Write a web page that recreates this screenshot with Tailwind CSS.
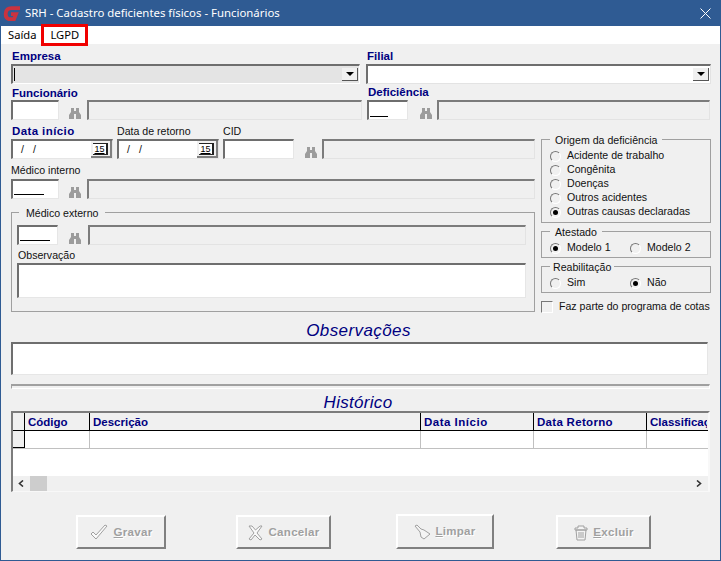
<!DOCTYPE html>
<html lang="en">
<head>
<meta charset="UTF-8">
<script src="https://cdn.jsdelivr.net/npm/@tailwindcss/browser@4"></script>
<title>SRH</title>
</head>
<body class="w-[721px] h-[561px] overflow-hidden bg-[#f0f0f0] font-['Liberation_Sans',sans-serif] text-[10.6px] text-[#111]">
<div class="relative w-[721px] h-[561px] border-x border-b border-[#2f5b93]">

  <!-- title bar -->
  <div class="flex items-center h-[26px] -mx-px bg-[#2f5b93] text-white">
    <svg class="ml-[3px] w-[18px] h-[17px]" viewBox="0 0 18 17"><path d="M17 3.200H8.500Q3.500 3.200 2.800 8T6 14.200H11L13 9.200H8" fill="none" stroke="#c9333f" stroke-width="3.800"/></svg>
    <span class="ml-[4px] font-['Noto_Sans',sans-serif] text-[11.4px]">SRH - Cadastro deficientes físicos - Funcionários</span>
    <svg class="ml-auto mr-[10px] w-[11px] h-[11px]" viewBox="0 0 11 11"><path d="M.5.5l10 10M10.500.5l-10 10" stroke="#fff" fill="none"/></svg>
  </div>

  <!-- menu -->
  <div class="flex items-center h-[18px] bg-white font-['Noto_Sans',sans-serif] text-[11.2px] text-black">
    <span class="ml-[7px]">Saída</span>
    <span class="ml-[14px]">LGPD</span>
  </div>
  <div class="absolute left-[40px] top-[24px] w-[47px] h-[22px] border-[3px] border-[#f00000]"></div>

  <div class="pl-[10px]">
    <!-- empresa / filial -->
    <div class="grid grid-cols-[355px_345px]">
      <div>
        <div class="flex items-end h-[20px] pb-[2px] pl-px leading-none font-bold text-[#000080] text-[11.5px]">Empresa</div>
        <div class="flex items-center justify-between w-[349px] h-[20px] bg-[#e4e4e4] border-t-2 border-l-2 border-t-[#6e6e6e] border-l-[#6e6e6e] border-r border-b border-r-white border-b-white">
          <span class="ml-px w-px h-[13px] bg-black"></span>
          <span class="flex items-center justify-center w-[16px] h-[13px] bg-[#f0f0f0] border-r border-b border-[#555] mr-px"><span class="border-x-[4px] border-t-[4px] border-x-transparent border-t-black"></span></span>
        </div>
        <div class="flex items-end h-[16px] pb-px pl-px leading-none font-bold text-[#000080] text-[11.5px]">Funcionário</div>
        <div class="flex items-center">
          <div class="w-[48px] h-[20px] bg-white border-t-2 border-l-2 border-t-[#6e6e6e] border-l-[#6e6e6e] border-r border-b border-r-[#e6e6e6] border-b-[#e6e6e6]"></div>
          <svg class="ml-[10px] mt-[7px] w-[12px] h-[11px]" viewBox="0 0 12 11" fill="#9c9c9c"><path d="M2 0h3v3h2V0h3v4l2 3v4H7V6H5v5H0V7l2-3z"/></svg>
          <div class="ml-[6px] w-[275px] h-[20px] bg-[#f0f0f0] border-t-2 border-l-2 border-t-[#7c7c7c] border-l-[#7c7c7c] border-r border-b border-r-[#e3e3e3] border-b-[#e3e3e3]"></div>
        </div>
      </div>
      <div>
        <div class="flex items-end h-[20px] pb-[2px] pl-px leading-none font-bold text-[#000080] text-[11.5px]">Filial</div>
        <div class="flex items-center justify-end w-[345px] h-[20px] bg-white border-t-2 border-l-2 border-t-[#6e6e6e] border-l-[#6e6e6e] border-r border-b border-r-[#e3e3e3] border-b-[#e3e3e3]">
          <span class="flex items-center justify-center w-[16px] h-[13px] bg-[#f0f0f0] border-r border-b border-[#555] mr-px"><span class="border-x-[4px] border-t-[4px] border-x-transparent border-t-black"></span></span>
        </div>
        <div class="flex items-end h-[16px] pb-[2px] pl-[2px] leading-none font-bold text-[#000080] text-[11.5px]">Deficiência</div>
        <div class="flex items-center pl-px">
          <div class="flex items-end pb-[2px] pl-px w-[41px] h-[20px] bg-white border-t-2 border-l-2 border-t-[#6e6e6e] border-l-[#6e6e6e] border-r border-b border-r-[#e6e6e6] border-b-[#e6e6e6]"><span class="w-[18px] h-px bg-black"></span></div>
          <svg class="ml-[12px] mt-[7px] w-[12px] h-[11px]" viewBox="0 0 12 11" fill="#9c9c9c"><path d="M2 0h3v3h2V0h3v4l2 3v4H7V6H5v5H0V7l2-3z"/></svg>
          <div class="ml-[5px] w-[273px] h-[20px] bg-[#f0f0f0] border-t-2 border-l-2 border-t-[#7c7c7c] border-l-[#7c7c7c] border-r border-b border-r-[#e3e3e3] border-b-[#e3e3e3]"></div>
        </div>
      </div>
    </div>

    <div class="grid grid-cols-[524px_170px] gap-x-[6px]">
      <!-- left column -->
      <div>
        <div class="flex h-[19px] items-end pb-[2px] leading-none">
          <span class="w-[106px] pl-px font-bold text-[#000080] text-[11.5px] tracking-[.4px]">Data início</span>
          <span class="w-[106px]">Data de retorno</span>
          <span>CID</span>
        </div>
        <div class="flex items-center">
          <div class="flex items-center justify-between w-[102px] h-[20px] bg-white border-t-2 border-l-2 border-t-[#6e6e6e] border-l-[#6e6e6e] border-r border-b border-r-[#e6e6e6] border-b-[#e6e6e6]">
            <span class="ml-[8px] tracking-[3px]">/ /</span>
            <span class="flex items-center justify-center w-[21px] h-[17px] bg-[#f0f0f0] border-r-2 border-b-2 border-[#808080]"><span class="px-px border-r-2 border-b border-t border-[#222] bg-white text-[9px] leading-[10px] text-black underline">15</span></span>
          </div>
          <div class="flex items-center justify-between ml-[4px] w-[102px] h-[20px] bg-white border-t-2 border-l-2 border-t-[#6e6e6e] border-l-[#6e6e6e] border-r border-b border-r-[#e6e6e6] border-b-[#e6e6e6]">
            <span class="ml-[8px] tracking-[3px]">/ /</span>
            <span class="flex items-center justify-center w-[21px] h-[17px] bg-[#f0f0f0] border-r-2 border-b-2 border-[#808080]"><span class="px-px border-r-2 border-b border-t border-[#222] bg-white text-[9px] leading-[10px] text-black underline">15</span></span>
          </div>
          <div class="ml-[4px] w-[71px] h-[20px] bg-white border-t-2 border-l-2 border-t-[#6e6e6e] border-l-[#6e6e6e] border-r border-b border-r-[#e6e6e6] border-b-[#e6e6e6]"></div>
          <svg class="ml-[11px] mt-[7px] w-[12px] h-[11px]" viewBox="0 0 12 11" fill="#9c9c9c"><path d="M2 0h3v3h2V0h3v4l2 3v4H7V6H5v5H0V7l2-3z"/></svg>
          <div class="ml-[5px] w-[213px] h-[20px] bg-[#f0f0f0] border-t-2 border-l-2 border-t-[#7c7c7c] border-l-[#7c7c7c] border-r border-b border-r-[#e3e3e3] border-b-[#e3e3e3]"></div>
        </div>
        <div class="flex h-[20px] items-end pb-[3px] leading-none">Médico interno</div>
        <div class="flex items-center">
          <div class="flex items-end pb-[3px] pl-px w-[48px] h-[20px] bg-white border-t-2 border-l-2 border-t-[#6e6e6e] border-l-[#6e6e6e] border-r border-b border-r-[#e6e6e6] border-b-[#e6e6e6]"><span class="w-[30px] h-px bg-black"></span></div>
          <svg class="ml-[10px] mt-[7px] w-[12px] h-[11px]" viewBox="0 0 12 11" fill="#9c9c9c"><path d="M2 0h3v3h2V0h3v4l2 3v4H7V6H5v5H0V7l2-3z"/></svg>
          <div class="ml-[6px] w-[448px] h-[20px] bg-[#f0f0f0] border-t-2 border-l-2 border-t-[#7c7c7c] border-l-[#7c7c7c] border-r border-b border-r-[#e3e3e3] border-b-[#e3e3e3]"></div>
        </div>

        <!-- medico externo -->
        <div class="relative mt-[13px] h-[100px] pt-[12px] pl-[5px] border border-[#a0a0a0]">
          <span class="absolute left-[7px] -top-[7px] px-[7px] bg-[#f0f0f0]">Médico externo</span>
          <div class="flex items-center">
            <div class="flex items-end pb-[3px] pl-px w-[41px] h-[20px] bg-white border-t-2 border-l-2 border-t-[#6e6e6e] border-l-[#6e6e6e] border-r border-b border-r-[#e6e6e6] border-b-[#e6e6e6]"><span class="w-[30px] h-px bg-black"></span></div>
            <svg class="ml-[11px] mt-[6px] w-[12px] h-[11px]" viewBox="0 0 12 11" fill="#9c9c9c"><path d="M2 0h3v3h2V0h3v4l2 3v4H7V6H5v5H0V7l2-3z"/></svg>
            <div class="ml-[7px] w-[438px] h-[20px] bg-[#f0f0f0] border-t-2 border-l-2 border-t-[#7c7c7c] border-l-[#7c7c7c] border-r border-b border-r-[#e3e3e3] border-b-[#e3e3e3]"></div>
          </div>
          <div class="flex h-[18px] items-end pb-[2px] pl-px leading-none">Observação</div>
          <div class="w-[509px] h-[35px] bg-white border-t-2 border-l-2 border-t-[#6e6e6e] border-l-[#6e6e6e] border-r border-b border-r-[#e6e6e6] border-b-[#e6e6e6]"></div>
        </div>
      </div>

      <!-- right column -->
      <div class="pt-[19px]">
        <div class="relative h-[84px] pt-[9px] pl-[8px] border border-[#a0a0a0]">
          <span class="absolute left-[8px] -top-[7px] px-[5px] bg-[#f0f0f0]">Origem da deficiência</span>
          <div class="flex items-center h-[14px]"><span class="w-[11px] h-[11px] rounded-full bg-[#f0f0f0] border border-t-[#777] border-l-[#777] border-r-white border-b-white"></span><span class="ml-[6px]">Acidente de trabalho</span></div>
          <div class="flex items-center h-[14px]"><span class="w-[11px] h-[11px] rounded-full bg-[#f0f0f0] border border-t-[#777] border-l-[#777] border-r-white border-b-white"></span><span class="ml-[6px]">Congênita</span></div>
          <div class="flex items-center h-[14px]"><span class="w-[11px] h-[11px] rounded-full bg-[#f0f0f0] border border-t-[#777] border-l-[#777] border-r-white border-b-white"></span><span class="ml-[6px]">Doenças</span></div>
          <div class="flex items-center h-[14px]"><span class="w-[11px] h-[11px] rounded-full bg-[#f0f0f0] border border-t-[#777] border-l-[#777] border-r-white border-b-white"></span><span class="ml-[6px]">Outros acidentes</span></div>
          <div class="flex items-center h-[14px]"><span class="flex items-center justify-center w-[11px] h-[11px] rounded-full bg-[#f0f0f0] border border-t-[#777] border-l-[#777] border-r-white border-b-white"><span class="w-[5px] h-[5px] rounded-full bg-black"></span></span><span class="ml-[6px]">Outras causas declaradas</span></div>
        </div>
        <div class="relative mt-[8px] h-[27px] pt-[9px] pl-[8px] flex border border-[#a0a0a0]">
          <span class="absolute left-[8px] -top-[7px] px-[5px] bg-[#f0f0f0]">Atestado</span>
          <div class="flex items-center h-[14px] w-[80px]"><span class="flex items-center justify-center w-[11px] h-[11px] rounded-full bg-[#f0f0f0] border border-t-[#777] border-l-[#777] border-r-white border-b-white"><span class="w-[5px] h-[5px] rounded-full bg-black"></span></span><span class="ml-[6px]">Modelo 1</span></div>
          <div class="flex items-center h-[14px]"><span class="w-[11px] h-[11px] rounded-full bg-[#f0f0f0] border border-t-[#777] border-l-[#777] border-r-white border-b-white"></span><span class="ml-[6px]">Modelo 2</span></div>
        </div>
        <div class="relative mt-[8px] h-[27px] pt-[9px] pl-[8px] flex border border-[#a0a0a0]">
          <span class="absolute left-[8px] -top-[7px] px-[3px] bg-[#f0f0f0]">Reabilitação</span>
          <div class="flex items-center h-[14px] w-[80px]"><span class="w-[11px] h-[11px] rounded-full bg-[#f0f0f0] border border-t-[#777] border-l-[#777] border-r-white border-b-white"></span><span class="ml-[6px]">Sim</span></div>
          <div class="flex items-center h-[14px]"><span class="flex items-center justify-center w-[11px] h-[11px] rounded-full bg-[#f0f0f0] border border-t-[#777] border-l-[#777] border-r-white border-b-white"><span class="w-[5px] h-[5px] rounded-full bg-black"></span></span><span class="ml-[6px]">Não</span></div>
        </div>
        <div class="flex items-center mt-[8px] h-[12px]">
          <span class="shrink-0 w-[12px] h-[12px] bg-[#f0f0f0] border border-t-[#777] border-l-[#777] border-r-white border-b-white"></span>
          <span class="ml-[6px] whitespace-nowrap">Faz parte do programa de cotas</span>
        </div>
      </div>
    </div>

    <!-- observacoes -->
    <div class="flex justify-center items-center w-[695px] h-[29px] pt-[7px] italic text-[#000080] text-[17px] tracking-[.4px]">Observações</div>
    <div class="w-[697px] h-[33px] bg-white border-t-2 border-l-2 border-t-[#6e6e6e] border-l-[#6e6e6e] border-r border-b border-r-[#e6e6e6] border-b-[#e6e6e6]"></div>
    <div class="mt-[9px] w-[699px] h-[5px] border-t-2 border-t-[#a0a0a0] border-l border-l-[#a0a0a0] border-b border-b-white border-r border-r-white"></div>

    <!-- historico -->
    <div class="flex justify-center items-center w-[694px] h-[22px] pt-[5px] italic text-[#000080] text-[17px] tracking-[.3px]">Histórico</div>
    <div class="flex flex-col w-[699px] h-[81px] bg-white border-t-2 border-l-2 border-t-[#7c7c7c] border-l-[#7c7c7c] border-r-2 border-b border-r-[#f8f8f8] border-b-[#f8f8f8]">
      <div class="grid grid-cols-[12px_65px_331px_113px_113px_60px] h-[18px] bg-[#f0f0f0] leading-none font-bold text-[#000080] text-[11.5px] border-b border-black">
        <span class="border-r border-black"></span>
        <span class="pl-[3px] pt-[4px] border-r border-black">Código</span>
        <span class="pl-[3px] pt-[4px] border-r border-black">Descrição</span>
        <span class="pl-[3px] pt-[4px] border-r border-black tracking-[.5px]">Data Início</span>
        <span class="pl-[3px] pt-[4px] border-r border-black tracking-[.3px]">Data Retorno</span>
        <span class="pl-[3px] pt-[4px] overflow-hidden whitespace-nowrap">Classificação</span>
      </div>
      <div class="grid grid-cols-[12px_65px_331px_113px_113px_60px] h-[18px] border-b border-[#c0c0c0]">
        <span class="bg-[#f0f0f0] border-r border-b border-black"></span>
        <span class="border-r border-[#c0c0c0]"></span>
        <span class="border-r border-[#c0c0c0]"></span>
        <span class="border-r border-[#c0c0c0]"></span>
        <span class="border-r border-[#c0c0c0]"></span>
        <span></span>
      </div>
      <div class="flex-1"></div>
      <div class="flex items-center h-[15px] bg-[#f0f0f0]">
        <svg class="ml-[5px] w-[6px] h-[7px]" viewBox="0 0 6 7"><path d="M5 .5 1.500 3.500 5 6.500" fill="none" stroke="#333" stroke-width="1.600"/></svg>
        <span class="ml-[6px] w-[17px] h-[15px] bg-[#cdcdcd]"></span>
        <svg class="ml-auto mr-[6px] w-[6px] h-[7px]" viewBox="0 0 6 7"><path d="M1 .5 4.500 3.500 1 6.500" fill="none" stroke="#333" stroke-width="1.600"/></svg>
      </div>
    </div>

    <!-- buttons -->
    <div class="flex items-start mt-[22px] font-bold text-[11.5px] text-[#a0a0a0] [text-shadow:1px_1px_0_#fff]">
      <div class="flex items-center justify-center ml-[65px] w-[90px] h-[34px] mt-px pt-px border-2 border-t-white border-l-white border-r-[#808080] border-b-[#808080]">
        <svg class="w-[18px] h-[17px]" viewBox="0 0 18 17"><path d="M1 10l2-2 3 3 9-10 2 1-11 13z" fill="#fafafa" stroke="#a0a0a0"/></svg>
        <span class="ml-[6px] tracking-[.3px]"><span class="underline">G</span>ravar</span>
      </div>
      <div class="flex items-center justify-center ml-[70px] w-[95px] h-[34px] mt-px pt-px border-2 border-t-white border-l-white border-r-[#808080] border-b-[#808080]">
        <svg class="w-[15px] h-[16px]" viewBox="0 0 15 16"><path d="M1 1h3l3.500 4L12 1h2L9 8l5 6-2 1-5-5-4 5-2-1 5-6z" fill="#fafafa" stroke="#a0a0a0"/></svg>
        <span class="ml-[6px] tracking-[.3px]">Cancelar</span>
      </div>
      <div class="flex items-center justify-center ml-[65px] w-[98px] h-[35px] pt-px border-2 border-t-white border-l-white border-r-[#808080] border-b-[#808080]">
        <svg class="w-[17px] h-[16px]" viewBox="0 0 17 16"><path d="M1 2l2-1 4 4 3 1 6 4-6 5-3-2-1-5z" fill="#f4f4f4" stroke="#a0a0a0"/></svg>
        <span class="ml-[4px] tracking-[.3px]"><span class="underline">L</span>impar</span>
      </div>
      <div class="flex items-center justify-center ml-[62px] w-[95px] h-[34px] mt-px pt-px border-2 border-t-white border-l-white border-r-[#808080] border-b-[#808080]">
        <svg class="w-[16px] h-[16px]" viewBox="0 0 16 16"><path d="M5 1h6v2h3v2H2V3h3zM3 5h10l-1 10H4zM6 7v6M8 7v6M10 7v6" fill="#f4f4f4" stroke="#a0a0a0"/></svg>
        <span class="ml-[4px] tracking-[.3px]"><span class="underline">E</span>xcluir</span>
      </div>
    </div>
  </div>
</div>
</body>
</html>
